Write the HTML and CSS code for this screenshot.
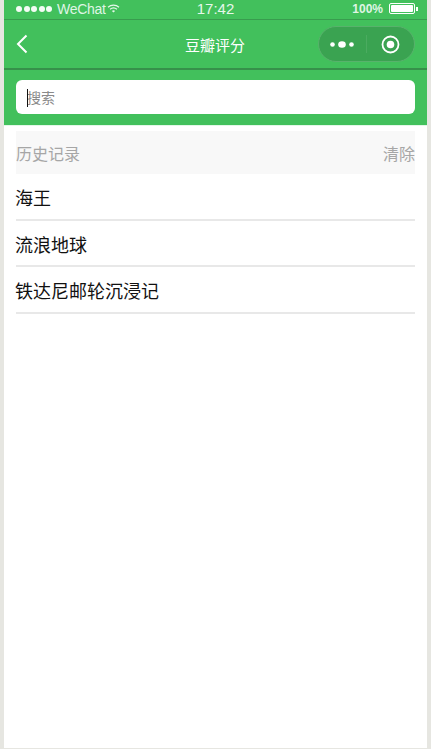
FILE: index.html
```html
<!DOCTYPE html>
<html lang="zh">
<head>
<meta charset="utf-8">
<title>豆瓣评分</title>
<link rel="stylesheet" href="styles.css">
</head>
<body>
<div class="phone">
  <header class="top">
    <div class="status">
      <div class="status-left">
        <span class="dots"><i></i><i></i><i></i><i></i><i></i></span>
        <span class="carrier">WeChat</span>
        <svg class="wifi" width="13" height="9" viewBox="0 0 13 9"><path d="M1 3.200C4.200.4 8.800.4 12 3.200M3 5.200c2-1.600 5-1.600 7 0" fill="none" stroke="#e6f7ea" stroke-width="1.200"/><path d="M4.900 6.900c1-.8 2.200-.8 3.200 0L6.500 8.600z" fill="#e6f7ea"/></svg>
      </div>
      <div class="time">17:42</div>
      <div class="status-right">
        <span class="pct">100%</span>
        <span class="battery"><span class="battery-fill"></span></span>
        <span class="battery-tip"></span>
      </div>
    </div>
    <div class="nav">
      <svg class="back" width="12" height="20" viewBox="0 0 12 20"><path d="M10.500 1.500 2 10l8.500 8.500" fill="none" stroke="#fff" stroke-width="2"/></svg>
      <div class="title">豆瓣评分</div>
      <div class="capsule">
        <svg class="more" width="24" height="9" viewBox="0 0 24 9"><circle cx="2.500" cy="4.500" r="2.300" fill="#fff"/><ellipse cx="12" cy="4.500" rx="3.800" ry="3.300" fill="#fff"/><circle cx="21.500" cy="4.500" r="2.300" fill="#fff"/></svg>
        <span class="sep"></span>
        <svg class="target" width="19" height="19" viewBox="0 0 19 19"><circle cx="9.500" cy="9.500" r="8" fill="none" stroke="#fff" stroke-width="1.800"/><circle cx="9.500" cy="9.500" r="3.800" fill="#fff"/></svg>
      </div>
    </div>
    <div class="search-area">
      <div class="search"><span class="caret"></span><span class="placeholder">搜索</span></div>
    </div>
  </header>
  <main class="content">
    <div class="history-head"><span>历史记录</span><span>清除</span></div>
    <ul class="list">
      <li>海王</li>
      <li>流浪地球</li>
      <li>铁达尼邮轮沉浸记</li>
    </ul>
  </main>
</div>
</body>
</html>
```

FILE: styles.css
```css
* { box-sizing: border-box; }
html, body { margin: 0; height: 100%; }
body {
  background: #e6e6e1;
  padding: 0 4px 1px;
  font-family: "Liberation Sans", "Noto Sans CJK SC", sans-serif;
  overflow: hidden;
}
.phone { height: 748px; background: #fff; display: flex; flex-direction: column; }
.top { background: #42c05c; color: #fff; }
.status {
  height: 20px;
  border-bottom: 1px solid #389c4e;
  display: grid;
  grid-template-columns: 1fr auto 1fr;
  align-items: center;
  padding: 0 9px 2px 12px;
  font-size: 14px;
}
.status-left { display: flex; align-items: center; }
.dots { display: flex; gap: 1.500px; margin-right: 5px; }
.dots i { width: 6px; height: 6px; border-radius: 50%; background: #f4fcf6; }
.carrier { color: #dff5e4; letter-spacing: -.3px; }
.wifi { margin-left: 1px; }
.time { font-size: 15px; color: #e6f7ea; padding-right: 3px; }
.status-right { display: flex; align-items: center; justify-content: flex-end; }
.pct { font-size: 12px; font-weight: 700; color: #dff5e4; margin-right: 6px; }
.battery { width: 26px; height: 11px; border: 1px solid #fff; padding: 1px; border-radius: 2px; display: flex; }
.battery-fill { flex: 1; background: #fff; border-radius: 1px; }
.battery-tip { width: 2px; height: 4px; background: #fff; margin-left: 1px; }
.nav {
  height: 50px;
  border-bottom: 2px solid #36904a;
  display: grid;
  grid-template-columns: 1fr auto 1fr;
  align-items: center;
  padding: 0 12px;
}
.back { justify-self: start; }
.title { font-size: 15px; font-family: "Noto Sans CJK SC", sans-serif; margin-right: 1px; }
.capsule {
  justify-self: end;
  width: 97px;
  height: 36px;
  border-radius: 18px;
  background: #3aa351;
  border: 1px solid #58b26c;
  display: flex;
  align-items: center;
  padding-left: 11px;
}
.sep { width: 1px; height: 18px; background: #4bab60; margin: 0 14px 0 12px; }
.search-area { height: 55px; padding: 10px 12px 0; }
.search {
  height: 34px;
  background: #fff;
  border-radius: 6px;
  display: flex;
  align-items: center;
  padding-left: 11px;
  position: relative;
}
.caret { position: absolute; left: 11px; top: 9px; width: 1px; height: 18px; background: #111; }
.placeholder { font-size: 14px; color: #8a8a8a; font-family: "Noto Sans CJK SC", sans-serif; }
.content {
  flex: 1;
  padding: 5px 12px 0;
  border-top: 1px solid #e3f7e8;
  font-family: "Noto Sans CJK SC", sans-serif;
}
.history-head {
  height: 43px;
  background: #f8f8f8;
  display: flex;
  align-items: center;
  justify-content: space-between;
  font-size: 16px;
  color: #a6a6a6;
}
.list { list-style: none; margin: 0; padding: 0; }
.list li {
  height: 46.670px;
  line-height: 46px;
  font-size: 18px;
  color: #111;
  border-bottom: 2px solid #e8e8e8;
  text-indent: -1px;
}
```
